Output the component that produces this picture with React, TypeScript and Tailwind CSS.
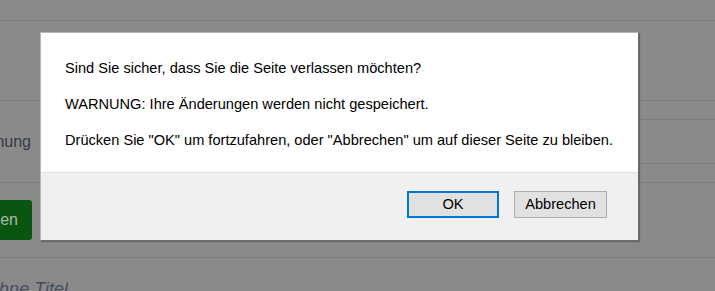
export default function App() {
  return (
    <div
      className="relative w-[715px] h-[291px] overflow-hidden bg-[#8a8a8a]"
      style={{ fontFamily: '"Liberation Sans", Arial, sans-serif' }}
    >
      {/* dimmed page behind the dialog */}
      <div className="flex flex-col">
        <div className="h-[21px] border-b border-[#7b7b82]" />
        <div className="h-[80px] border-b border-[#7b7b82]" />
        <div className="h-[82px] flex items-center border-b border-[#7b7b82]">
          <div className="w-[31px] overflow-hidden flex justify-end shrink-0">
            <span className="text-[16px] text-[#353a47] whitespace-nowrap">Bezeichnung</span>
          </div>
          <div className="ml-[170px] flex-1 h-[45px] border-y border-[#7b7b82]" />
        </div>
        <div className="h-[75px] flex items-center border-b border-[#7b7b82]">
          <div className="w-[32px] h-[40px] overflow-hidden flex justify-end items-center rounded-r-[3px] bg-[#0a5510] pr-[14px]">
            <span className="text-[16px] text-[#a9b9aa] whitespace-nowrap">Hinzufügen</span>
          </div>
        </div>
        <div className="pt-[22px]">
          <div className="w-[68px] overflow-hidden flex justify-end">
            <span className="text-[18px] leading-[18px] italic text-[#464d5e] whitespace-nowrap">Ohne Titel</span>
          </div>
        </div>
      </div>

      {/* confirm dialog */}
      <div className="absolute left-[40px] top-[32px] w-[599px] h-[209px] flex flex-col bg-white border border-[#b5b5b5] border-r-[#6b6b6b] border-b-[#6b6b6b] shadow-[1px_1px_1px_rgba(0,0,0,0.25)]">
        <div className="flex-1 pt-[27px] pl-[24px] flex flex-col gap-[20px] text-[14.6px] leading-[16px] text-black">
          <p>Sind Sie sicher, dass Sie die Seite verlassen möchten?</p>
          <p>WARNUNG: Ihre Änderungen werden nicht gespeichert.</p>
          <p>Drücken Sie "OK" um fortzufahren, oder "Abbrechen" um auf dieser Seite zu bleiben.</p>
        </div>
        <div className="h-[68px] shrink-0 bg-[#f0f0f0] border-t border-[#dfdfdf] flex justify-end items-start pt-[18px] pr-[31px] gap-[15px]">
          <button className="w-[92px] h-[27px] bg-[#e1e1e1] border-2 border-[#0078d7] text-[14.6px] text-black">
            OK
          </button>
          <button className="w-[93px] h-[27px] bg-[#e1e1e1] border border-[#adadad] text-[14.6px] text-black">
            Abbrechen
          </button>
        </div>
      </div>
    </div>
  );
}
